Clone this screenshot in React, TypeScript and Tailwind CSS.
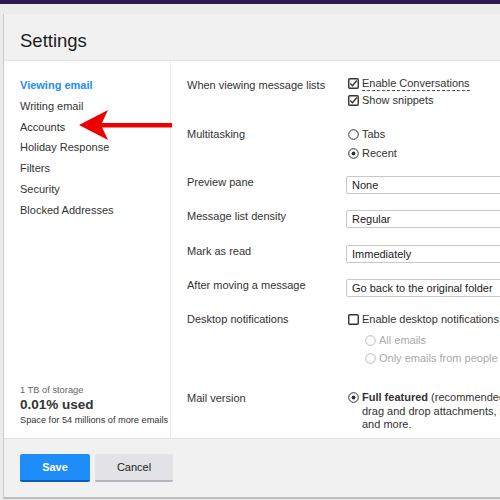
import React from "react";

const font = { fontFamily: '"Liberation Sans", Arial, sans-serif' };

function CheckBox({ checked }: { checked: boolean }) {
  return (
    <svg width="11" height="11" viewBox="0 0 11 11" className="shrink-0">
      <rect x="0.75" y="0.75" width="9.5" height="9.5" rx="1" fill="white" stroke="#333" strokeWidth="1.4" />
      {checked && <path d="M2.3 5.6 L4.5 7.8 L8.8 2.5" fill="none" stroke="#333" strokeWidth="1.4" />}
    </svg>
  );
}

function Radio({ checked, muted }: { checked: boolean; muted?: boolean }) {
  const c = muted ? "#bbb" : "#333";
  return (
    <svg width="11" height="11" viewBox="0 0 11 11" className="shrink-0">
      <circle cx="5.5" cy="5.5" r="4.8" fill="white" stroke={c} strokeWidth="1" />
      {checked && <circle cx="5.5" cy="5.5" r="1.9" fill={c} />}
    </svg>
  );
}

function Select({ value }: { value: string }) {
  return (
    <div className="mt-[3px] h-[18px] w-[200px] border border-[#c8c8c8] rounded-[2px] bg-white pl-[5px] text-[11px] leading-[16px] text-[#222] whitespace-nowrap">
      {value}
    </div>
  );
}

const navItems = ["Writing email", "Accounts", "Holiday Response", "Filters", "Security", "Blocked Addresses"];

export default function App() {
  return (
    <div style={font} className="relative w-[500px] h-[500px] overflow-hidden bg-[#ebebeb]">
      <div className="h-[4px] bg-[#2a1b4d]" />
      <div className="pt-[10px] pl-[3px]">
        <div className="w-[560px] h-[485px] bg-white border-l border-[#c9c9c9] border-b-2 border-b-[#bdbdbd] flex flex-col">
          <div className="h-[47px] shrink-0 bg-[#f1f1f1] border-b border-[#e2e2e2] pl-[16px] pt-[15px] text-[18.5px] leading-[24px] text-[#1d1d1d]">
            Settings
          </div>

          <div className="flex-1 flex overflow-hidden">
            <div className="w-[167px] shrink-0 border-r border-[#ececec] flex flex-col justify-between pl-[16px] pt-[14px] pb-[11px]">
              <div className="text-[11px] leading-[20.8px] text-[#333]">
                <div className="font-bold text-[#1d8cf8]">Viewing email</div>
                {navItems.map((n) => (
                  <div key={n}>{n}</div>
                ))}
              </div>
              <div>
                <div className="text-[9.3px] leading-[12px] text-[#666]">1 TB of storage</div>
                <div className="text-[13.5px] leading-[18px] font-bold text-[#333]">0.01% used</div>
                <div className="text-[9.2px] leading-[13px] text-[#333] whitespace-nowrap">Space for 54 millions of more emails</div>
              </div>
            </div>

            <div className="flex-1 pl-[16px] pt-[15px] text-[11px] leading-[18px] text-[#333]">
              <div className="flex">
                <div className="w-[160px] shrink-0">When viewing message lists</div>
                <div className="pl-[1px]">
                  <div className="flex items-center gap-[3px]">
                    <CheckBox checked />
                    <span className="border-b border-dashed border-[#555] leading-[14px]">Enable Conversations</span>
                  </div>
                  <div className="flex items-center gap-[3px]">
                    <CheckBox checked />
                    <span>Show snippets</span>
                  </div>
                </div>
              </div>

              <div className="flex mt-[16px]">
                <div className="w-[160px] shrink-0">Multitasking</div>
                <div className="pl-[1px] leading-[19px]">
                  <div className="flex items-center gap-[3px]">
                    <Radio checked={false} />
                    <span>Tabs</span>
                  </div>
                  <div className="flex items-center gap-[3px]">
                    <Radio checked />
                    <span>Recent</span>
                  </div>
                </div>
              </div>

              <div className="flex mt-[10px]">
                <div className="w-[159px] shrink-0">Preview pane</div>
                <Select value="None" />
              </div>
              <div className="flex mt-[13px]">
                <div className="w-[159px] shrink-0">Message list density</div>
                <Select value="Regular" />
              </div>
              <div className="flex mt-[14px]">
                <div className="w-[159px] shrink-0">Mark as read</div>
                <Select value="Immediately" />
              </div>
              <div className="flex mt-[13px]">
                <div className="w-[159px] shrink-0">After moving a message</div>
                <Select value="Go back to the original folder" />
              </div>

              <div className="flex mt-[13px]">
                <div className="w-[160px] shrink-0">Desktop notifications</div>
                <div className="pl-[1px]">
                  <div className="flex items-center gap-[3px] whitespace-nowrap">
                    <CheckBox checked={false} />
                    <span>Enable desktop notifications</span>
                  </div>
                  <div className="mt-[3px] pl-[17px] text-[#aaa]">
                    <div className="flex items-center gap-[3px] whitespace-nowrap">
                      <Radio checked={false} muted />
                      <span>All emails</span>
                    </div>
                    <div className="flex items-center gap-[3px] whitespace-nowrap">
                      <Radio checked={false} muted />
                      <span>Only emails from people</span>
                    </div>
                  </div>
                </div>
              </div>

              <div className="flex mt-[22px]">
                <div className="w-[160px] shrink-0">Mail version</div>
                <div className="pl-[1px]">
                  <div className="flex items-start gap-[3px]">
                    <div className="pt-[3px]">
                      <Radio checked />
                    </div>
                    <div className="leading-[13.5px] whitespace-nowrap pt-[2px]">
                      <span className="font-bold">Full featured</span> (recommended) Themes, rich text,
                      <br />
                      drag and drop attachments, photo previews,
                      <br />
                      and more.
                    </div>
                  </div>
                  <div className="flex items-center gap-[3px] mt-[4px]">
                    <Radio checked={false} />
                    <span className="font-bold">Basic</span>
                  </div>
                </div>
              </div>
            </div>
          </div>

          <div className="h-[59px] shrink-0 bg-[#f1f1f1] border-t border-[#e2e2e2] flex items-center gap-[5px] pl-[16px]">
            <button className="w-[70px] h-[28px] rounded-[2px] bg-[#1e8cf9] border-b-2 border-[#0d5cb8] text-white text-[11px] font-bold">
              Save
            </button>
            <button className="w-[78px] h-[28px] rounded-[2px] bg-[#e2e2e7] border-b-2 border-[#b4b4bc] text-[#222] text-[11px]">
              Cancel
            </button>
          </div>
        </div>
      </div>

      <svg className="absolute left-0 top-0 pointer-events-none" width="500" height="500">
        <rect x="100" y="123" width="72" height="4.5" fill="#ee0000" />
        <path d="M79 125 L108 110 L101 125 L108 140 Z" fill="#ee0000" />
      </svg>
    </div>
  );
}
